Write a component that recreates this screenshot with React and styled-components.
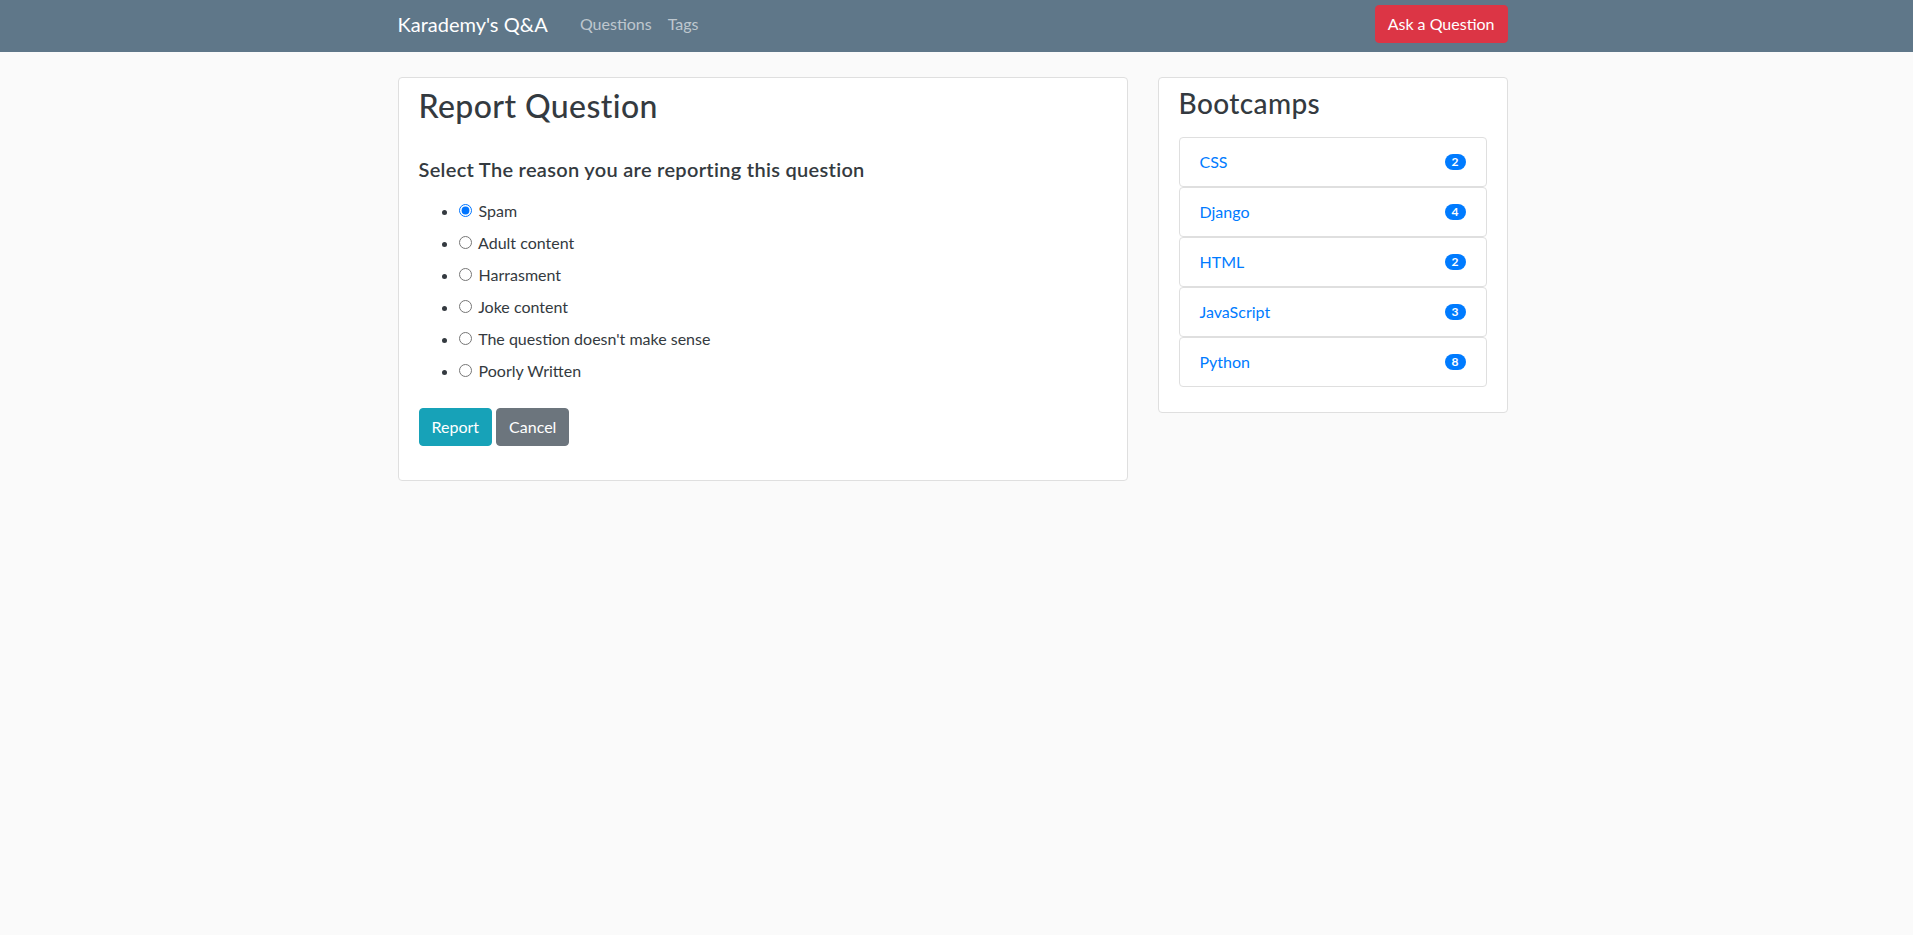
import React from "react";
import styled, { createGlobalStyle } from "styled-components";

const GlobalStyle = createGlobalStyle`
  body {
    margin: 0;
    background: #fafafa;
    font-family: Lato, "Open Sans", sans-serif;
    font-size: 16px;
    line-height: 1.5;
    color: #343a40;
  }
`;

const NavBar = styled.nav`
  background: #5f7789;
  height: 52px;
  box-sizing: border-box;
  padding: 5px 0 9px;
`;

const Inner = styled.div`
  width: 1110px;
  margin-left: calc(50% - 559px);
  display: flex;
  align-items: center;
  height: 100%;
`;

const Brand = styled.a`
  color: #fff;
  font-size: 20px;
  margin-right: 24px;
  text-decoration: none;
`;

const NavLink = styled.a`
  color: rgba(255, 255, 255, 0.6);
  padding: 0 8px;
  text-decoration: none;
`;

const Spacer = styled.div`
  flex: 1;
`;

const Button = styled.button`
  font-family: inherit;
  font-size: 16px;
  line-height: 24px;
  padding: 6px 12px;
  border: 1px solid ${({ bg }) => bg};
  border-radius: 4px;
  background: ${({ bg }) => bg};
  color: #fff;
  cursor: pointer;
  margin-right: ${({ gap }) => gap || 0}px;
`;

const Main = styled.div`
  width: 1110px;
  margin: 25px 0 0 calc(50% - 559px);
  display: flex;
  gap: 30px;
  align-items: flex-start;
`;

const Card = styled.div`
  flex: 0 0 ${({ w }) => w}px;
  box-sizing: border-box;
  background: #fff;
  border: 1px solid #dfdfdf;
  border-radius: 4px;
  padding: 9px 20px ${({ pb }) => pb}px;
`;

const Title = styled.h2`
  margin: 0 0 32px;
  font-size: 32px;
  font-weight: 500;
  line-height: 1.2;
  letter-spacing: 0.4px;
`;

const SideTitle = styled.h3`
  margin: 0 0 16px;
  font-size: 28px;
  font-weight: 500;
  line-height: 1.2;
  letter-spacing: 0.4px;
`;

const Prompt = styled.h5`
  margin: 0 0 14px;
  font-size: 20px;
  font-weight: 600;
  line-height: 1.2;
  letter-spacing: 0.3px;
`;

const Reasons = styled.ul`
  margin: 0 0 21px;
  padding-left: 40px;
`;

const Reason = styled.li`
  padding: 4px 0;
  line-height: 24px;
`;

const Radio = styled.input`
  margin: 0 3px 0 0;
  width: 13px;
  height: 13px;
`;

const Actions = styled.div`
  display: flex;
`;

const TagList = styled.div`
  display: flex;
  flex-direction: column;
`;

const TagItem = styled.a`
  display: flex;
  align-items: center;
  justify-content: space-between;
  padding: 12px 20px;
  border: 1px solid #dfdfdf;
  border-radius: 4px;
  color: #007bff;
  text-decoration: none;
`;

const Badge = styled.span`
  background: #007bff;
  color: #fff;
  font-size: 12px;
  font-weight: 700;
  line-height: 1;
  padding: 2px 7px;
  border-radius: 10px;
`;

const reasons = [
  "Spam",
  "Adult content",
  "Harrasment",
  "Joke content",
  "The question doesn't make sense",
  "Poorly Written",
];

const tags = [
  ["CSS", 2],
  ["Django", 4],
  ["HTML", 2],
  ["JavaScript", 3],
  ["Python", 8],
];

export default function App() {
  return (
    <>
      <GlobalStyle />
      <NavBar>
        <Inner>
          <Brand href="#">Karademy's Q&amp;A</Brand>
          <NavLink href="#">Questions</NavLink>
          <NavLink href="#">Tags</NavLink>
          <Spacer />
          <Button bg="#dc3545">Ask a Question</Button>
        </Inner>
      </NavBar>
      <Main>
        <Card w={730} pb={34}>
          <Title>Report Question</Title>
          <Prompt>Select The reason you are reporting this question</Prompt>
          <Reasons>
            {reasons.map((r, i) => (
              <Reason key={r}>
                <label>
                  <Radio type="radio" name="reason" defaultChecked={i === 0} /> {r}
                </label>
              </Reason>
            ))}
          </Reasons>
          <Actions>
            <Button bg="#17a2b8" gap={4}>Report</Button>
            <Button bg="#6c757d">Cancel</Button>
          </Actions>
        </Card>
        <Card w={350} pb={25}>
          <SideTitle>Bootcamps</SideTitle>
          <TagList>
            {tags.map(([name, n]) => (
              <TagItem href="#" key={name}>
                {name}
                <Badge>{n}</Badge>
              </TagItem>
            ))}
          </TagList>
        </Card>
      </Main>
    </>
  );
}
